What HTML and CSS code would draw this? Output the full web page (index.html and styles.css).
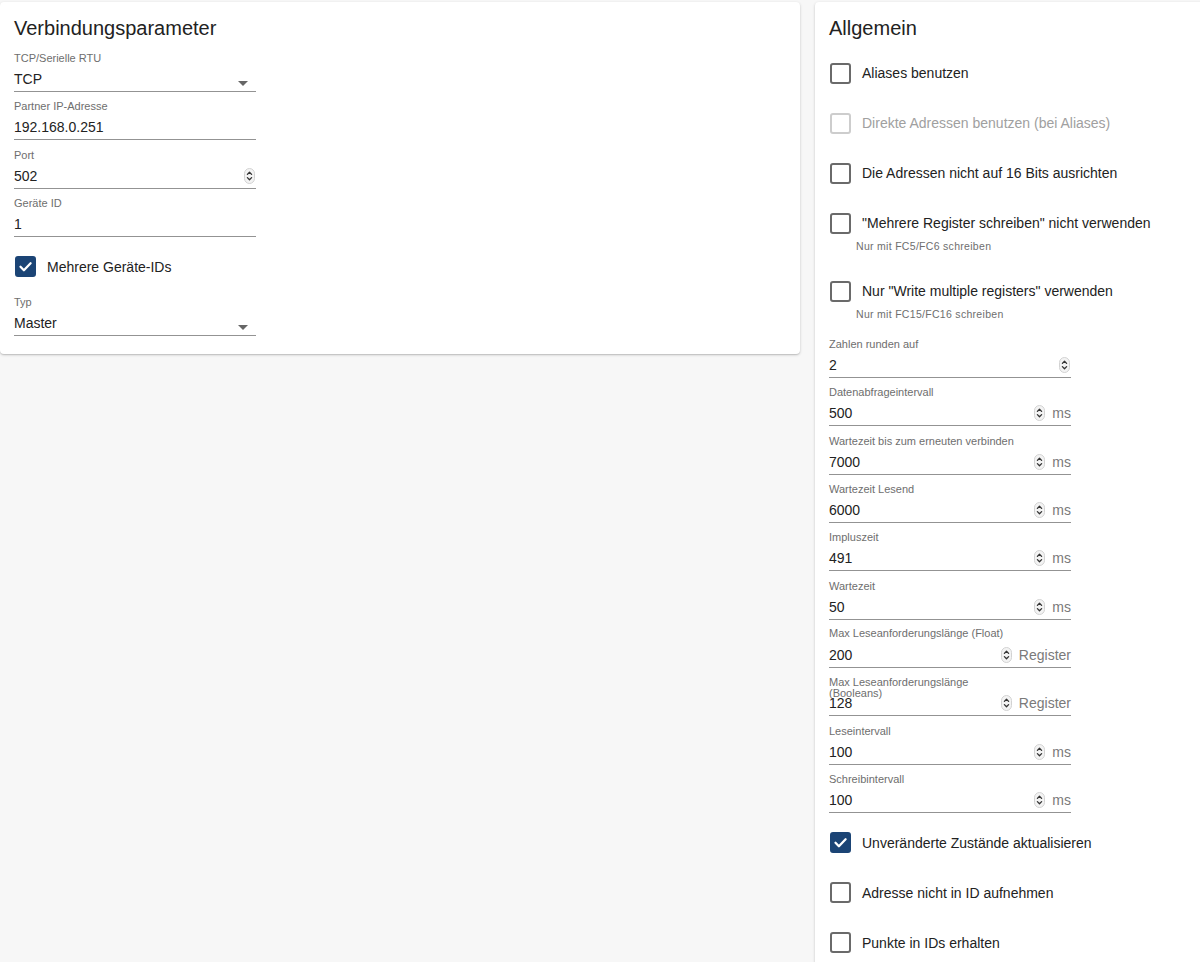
FILE: index.html
```html
<!DOCTYPE html>
<html lang="de">
<head>
<meta charset="utf-8">
<title>Modbus Einstellungen</title>
<link rel="stylesheet" href="styles.css">
</head>
<body>
<div class="page">
  <section class="card card-left">
    <h2 class="card-title">Verbindungsparameter</h2>

    <div class="field">
      <div class="field-label">TCP/Serielle RTU</div>
      <div class="field-input"><span class="value">TCP</span><span class="select-arrow"></span></div>
    </div>
    <div class="field">
      <div class="field-label">Partner IP-Adresse</div>
      <div class="field-input"><span class="value">192.168.0.251</span></div>
    </div>
    <div class="field">
      <div class="field-label">Port</div>
      <div class="field-input"><span class="value">502</span>
        <svg class="spin spin-end" viewBox="0 0 11 16"><rect x="0.5" y="0.5" width="10" height="15" rx="5" fill="#f3f3f3" stroke="#d2d2d2"/><path d="M3.4 6.4 5.5 4.3 7.6 6.4M3.4 9.6 5.5 11.7 7.6 9.6" fill="none" stroke="#333" stroke-width="1.3" stroke-linecap="round" stroke-linejoin="round"/></svg>
      </div>
    </div>
    <div class="field">
      <div class="field-label">Geräte ID</div>
      <div class="field-input"><span class="value">1</span></div>
    </div>

    <div class="check check-left">
      <span class="box checked"><svg viewBox="0 0 17 17"><path d="M3.5 8.8 6.9 12.2 13.6 5.3" fill="none" stroke="#fff" stroke-width="2.3" stroke-linecap="round" stroke-linejoin="round"/></svg></span>
      <span>Mehrere Geräte-IDs</span>
    </div>

    <div class="field field-last">
      <div class="field-label">Typ</div>
      <div class="field-input"><span class="value">Master</span><span class="select-arrow"></span></div>
    </div>
  </section>

  <section class="card card-right">
    <h2 class="card-title">Allgemein</h2>

    <div class="check-group check-group-top">
      <div class="check-item">
        <div class="check"><span class="box"></span><span>Aliases benutzen</span></div>
      </div>
      <div class="check-item">
        <div class="check disabled"><span class="box"></span><span>Direkte Adressen benutzen (bei Aliases)</span></div>
      </div>
      <div class="check-item">
        <div class="check"><span class="box"></span><span>Die Adressen nicht auf 16 Bits ausrichten</span></div>
      </div>
      <div class="check-item">
        <div class="check"><span class="box"></span><span>"Mehrere Register schreiben" nicht verwenden</span></div>
        <div class="helper">Nur mit FC5/FC6 schreiben</div>
      </div>
      <div class="check-item">
        <div class="check"><span class="box"></span><span>Nur "Write multiple registers" verwenden</span></div>
        <div class="helper">Nur mit FC15/FC16 schreiben</div>
      </div>
    </div>

    <div class="field-group">
      <div class="field">
        <div class="field-label">Zahlen runden auf</div>
        <div class="field-input"><span class="value">2</span>
          <svg class="spin spin-end" viewBox="0 0 11 16"><rect x="0.5" y="0.5" width="10" height="15" rx="5" fill="#f3f3f3" stroke="#d2d2d2"/><path d="M3.4 6.4 5.5 4.3 7.6 6.4M3.4 9.6 5.5 11.7 7.6 9.6" fill="none" stroke="#333" stroke-width="1.3" stroke-linecap="round" stroke-linejoin="round"/></svg>
        </div>
      </div>
      <div class="field">
        <div class="field-label">Datenabfrageintervall</div>
        <div class="field-input"><span class="value">500</span>
          <svg class="spin" viewBox="0 0 11 16"><rect x="0.5" y="0.5" width="10" height="15" rx="5" fill="#f3f3f3" stroke="#d2d2d2"/><path d="M3.4 6.4 5.5 4.3 7.6 6.4M3.4 9.6 5.5 11.7 7.6 9.6" fill="none" stroke="#333" stroke-width="1.3" stroke-linecap="round" stroke-linejoin="round"/></svg>
          <span class="unit">ms</span>
        </div>
      </div>
      <div class="field">
        <div class="field-label">Wartezeit bis zum erneuten verbinden</div>
        <div class="field-input"><span class="value">7000</span>
          <svg class="spin" viewBox="0 0 11 16"><rect x="0.5" y="0.5" width="10" height="15" rx="5" fill="#f3f3f3" stroke="#d2d2d2"/><path d="M3.4 6.4 5.5 4.3 7.6 6.4M3.4 9.6 5.5 11.7 7.6 9.6" fill="none" stroke="#333" stroke-width="1.3" stroke-linecap="round" stroke-linejoin="round"/></svg>
          <span class="unit">ms</span>
        </div>
      </div>
      <div class="field">
        <div class="field-label">Wartezeit Lesend</div>
        <div class="field-input"><span class="value">6000</span>
          <svg class="spin" viewBox="0 0 11 16"><rect x="0.5" y="0.5" width="10" height="15" rx="5" fill="#f3f3f3" stroke="#d2d2d2"/><path d="M3.4 6.4 5.5 4.3 7.6 6.4M3.4 9.6 5.5 11.7 7.6 9.6" fill="none" stroke="#333" stroke-width="1.3" stroke-linecap="round" stroke-linejoin="round"/></svg>
          <span class="unit">ms</span>
        </div>
      </div>
      <div class="field">
        <div class="field-label">Impluszeit</div>
        <div class="field-input"><span class="value">491</span>
          <svg class="spin" viewBox="0 0 11 16"><rect x="0.5" y="0.5" width="10" height="15" rx="5" fill="#f3f3f3" stroke="#d2d2d2"/><path d="M3.4 6.4 5.5 4.3 7.6 6.4M3.4 9.6 5.5 11.7 7.6 9.6" fill="none" stroke="#333" stroke-width="1.3" stroke-linecap="round" stroke-linejoin="round"/></svg>
          <span class="unit">ms</span>
        </div>
      </div>
      <div class="field">
        <div class="field-label">Wartezeit</div>
        <div class="field-input"><span class="value">50</span>
          <svg class="spin" viewBox="0 0 11 16"><rect x="0.5" y="0.5" width="10" height="15" rx="5" fill="#f3f3f3" stroke="#d2d2d2"/><path d="M3.4 6.4 5.5 4.3 7.6 6.4M3.4 9.6 5.5 11.7 7.6 9.6" fill="none" stroke="#333" stroke-width="1.3" stroke-linecap="round" stroke-linejoin="round"/></svg>
          <span class="unit">ms</span>
        </div>
      </div>
      <div class="field">
        <div class="field-label field-label-narrow">Max Leseanforderungslänge (Float)</div>
        <div class="field-input"><span class="value">200</span>
          <svg class="spin" viewBox="0 0 11 16"><rect x="0.5" y="0.5" width="10" height="15" rx="5" fill="#f3f3f3" stroke="#d2d2d2"/><path d="M3.4 6.4 5.5 4.3 7.6 6.4M3.4 9.6 5.5 11.7 7.6 9.6" fill="none" stroke="#333" stroke-width="1.3" stroke-linecap="round" stroke-linejoin="round"/></svg>
          <span class="unit">Register</span>
        </div>
      </div>
      <div class="field">
        <div class="field-label field-label-narrow">Max Leseanforderungslänge (Booleans)</div>
        <div class="field-input"><span class="value">128</span>
          <svg class="spin" viewBox="0 0 11 16"><rect x="0.5" y="0.5" width="10" height="15" rx="5" fill="#f3f3f3" stroke="#d2d2d2"/><path d="M3.4 6.4 5.5 4.3 7.6 6.4M3.4 9.6 5.5 11.7 7.6 9.6" fill="none" stroke="#333" stroke-width="1.3" stroke-linecap="round" stroke-linejoin="round"/></svg>
          <span class="unit">Register</span>
        </div>
      </div>
      <div class="field">
        <div class="field-label">Leseintervall</div>
        <div class="field-input"><span class="value">100</span>
          <svg class="spin" viewBox="0 0 11 16"><rect x="0.5" y="0.5" width="10" height="15" rx="5" fill="#f3f3f3" stroke="#d2d2d2"/><path d="M3.4 6.4 5.5 4.3 7.6 6.4M3.4 9.6 5.5 11.7 7.6 9.6" fill="none" stroke="#333" stroke-width="1.3" stroke-linecap="round" stroke-linejoin="round"/></svg>
          <span class="unit">ms</span>
        </div>
      </div>
      <div class="field">
        <div class="field-label">Schreibintervall</div>
        <div class="field-input"><span class="value">100</span>
          <svg class="spin" viewBox="0 0 11 16"><rect x="0.5" y="0.5" width="10" height="15" rx="5" fill="#f3f3f3" stroke="#d2d2d2"/><path d="M3.4 6.4 5.5 4.3 7.6 6.4M3.4 9.6 5.5 11.7 7.6 9.6" fill="none" stroke="#333" stroke-width="1.3" stroke-linecap="round" stroke-linejoin="round"/></svg>
          <span class="unit">ms</span>
        </div>
      </div>
    </div>

    <div class="check-group check-group-bottom">
      <div class="check-item">
        <div class="check"><span class="box checked"><svg viewBox="0 0 17 17"><path d="M3.5 8.8 6.9 12.2 13.6 5.3" fill="none" stroke="#fff" stroke-width="2.3" stroke-linecap="round" stroke-linejoin="round"/></svg></span><span>Unveränderte Zustände aktualisieren</span></div>
      </div>
      <div class="check-item">
        <div class="check"><span class="box"></span><span>Adresse nicht in ID aufnehmen</span></div>
      </div>
      <div class="check-item">
        <div class="check"><span class="box"></span><span>Punkte in IDs erhalten</span></div>
      </div>
    </div>
  </section>
</div>
</body>
</html>
```

FILE: styles.css
```css
* {
  box-sizing: border-box;
}

html,
body {
  overflow: hidden;
}

body {
  margin: 0;
  height: 962px;
  background: #f7f7f7;
  font-family: "Liberation Sans", Arial, sans-serif;
  color: #222;
}

.page {
  display: grid;
  grid-template-columns: 800px 400px;
  column-gap: 15px;
  align-items: start;
  width: 1215px;
  padding-top: 2px;
}

.card {
  display: flex;
  flex-direction: column;
  align-items: flex-start;
  background: #fff;
  border-radius: 4px;
  box-shadow: 0 1px 3px rgba(0, 0, 0, 0.18), 0 1px 1px rgba(0, 0, 0, 0.1);
  padding: 12px 14px 18px;
}

.card-right {
  min-height: 1100px;
}

.card-title {
  margin: 0 0 8px;
  font-size: 20px;
  line-height: 28px;
  font-weight: 400;
  color: #222;
}

/* text fields */
.field-group,
.check-group,
.check-item {
  display: flex;
  flex-direction: column;
  align-items: flex-start;
}

.field {
  width: 242px;
  margin-bottom: 6.33px;
}

.field-last {
  margin-bottom: 0;
}

.field-label {
  height: 17px;
  font-size: 11px;
  line-height: 16px;
  color: #6e6e6e;
  white-space: nowrap;
}

.field-label-narrow {
  white-space: normal;
  max-width: 182px;
  line-height: 11px;
  padding-top: 2.5px;
}

.field-input {
  display: flex;
  align-items: center;
  height: 25px;
  border-bottom: 1px solid #939393;
  font-size: 14px;
  color: #222;
}

.value {
  flex: 1;
}

.select-arrow {
  width: 0;
  height: 0;
  border-left: 5px solid transparent;
  border-right: 5px solid transparent;
  border-top: 5px solid #666;
  margin: 9px 8px 0 0;
}

.spin {
  width: 11px;
  height: 16px;
  flex: none;
}

.spin-end {
  margin-right: 1px;
}

.unit {
  margin-left: 7px;
  color: #7a7a7a;
}

/* checkboxes */
.check {
  display: flex;
  align-items: center;
  gap: 11px;
  height: 40px;
  font-size: 14px;
  color: #222;
}

.check-left {
  margin: 3.67px 0 7px;
}

.box {
  width: 21px;
  height: 21px;
  margin-left: 1px;
  border: 2px solid #6a6a6a;
  border-radius: 3px;
  flex: none;
  display: flex;
  align-items: center;
  justify-content: center;
}

.box svg {
  width: 17px;
  height: 17px;
}

.box.checked {
  background: #1b4475;
  border-color: #1b4475;
}

.check.disabled {
  color: #a0a0a0;
}

.check.disabled .box {
  border-color: #cdcdcd;
}

.check-item {
  margin-bottom: 10px;
}

.helper {
  margin: -3px 0 9px 27px;
  font-size: 10.5px;
  line-height: 12px;
  letter-spacing: 0.3px;
  color: #6e6e6e;
}

.check-group-top {
  padding-top: 3px;
}

.field-group {
  margin-top: -3px;
}

.check-group-bottom {
  margin-top: 3.67px;
}
```
